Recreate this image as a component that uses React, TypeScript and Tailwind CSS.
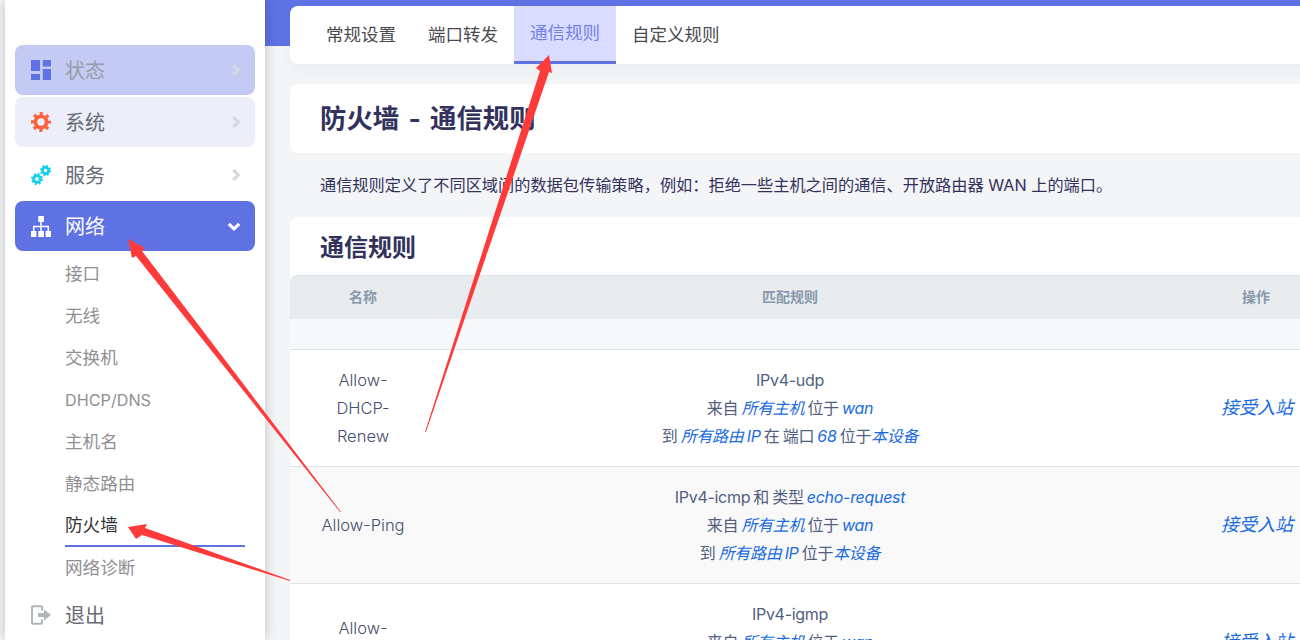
import React from "react";

function Dash() {
  return (
    <svg viewBox="0 0 20 20" className="w-5 h-5 fill-[#5e72e4]">
      <rect x="0" y="0" width="9" height="11" />
      <rect x="11.8" y="0" width="8.2" height="6.5" />
      <rect x="0" y="14" width="9" height="6" />
      <rect x="11.8" y="9" width="8.2" height="11" />
    </svg>
  );
}

function Gear() {
  return (
    <svg viewBox="0 0 20 20" className="w-5 h-5" fill="none" stroke="#fb6340">
      <circle cx="10" cy="10" r="5.6" strokeWidth="3.8" />
      <circle cx="10" cy="10" r="8.4" strokeWidth="3.2" strokeDasharray="3.2 3.4" strokeDashoffset="1.6" />
    </svg>
  );
}

function Cogs() {
  return (
    <svg viewBox="0 0 20 20" className="w-5 h-5" fill="none" stroke="#11cdef">
      <circle cx="6" cy="14" r="3.3" strokeWidth="2.8" />
      <circle cx="6" cy="14" r="5" strokeWidth="2" strokeDasharray="2 1.93" />
      <circle cx="14.5" cy="5.5" r="3.1" strokeWidth="2.6" />
      <circle cx="14.5" cy="5.5" r="4.6" strokeWidth="1.9" strokeDasharray="1.9 1.71" />
    </svg>
  );
}

function SiteMap() {
  return (
    <svg viewBox="0 0 20 21" className="w-5 h-[21px] shrink-0" fill="white">
      <rect x="7.3" y="0" width="5.6" height="6" />
      <rect x="0" y="15" width="5.4" height="6" />
      <rect x="7.3" y="15" width="5.6" height="6" />
      <rect x="14.6" y="15" width="5.4" height="6" />
      <path d="M10 6v9M2.7 15v-4.5h14.6V15" stroke="white" strokeWidth="1.5" fill="none" />
    </svg>
  );
}

function Exit() {
  return (
    <svg viewBox="0 0 20 20" className="w-5 h-5" fill="none">
      <path d="M11 5.5V2.2a1 1 0 0 0-1-1H2a1 1 0 0 0-1 1v15.6a1 1 0 0 0 1 1h8a1 1 0 0 0 1-1v-3.3" stroke="#adb5bd" strokeWidth="2" />
      <path d="M7 8h6V4.5l7 5.5-7 5.5V12H7z" fill="#adb5bd" />
    </svg>
  );
}

function ChevR() {
  return (
    <svg viewBox="0 0 10 14" className="w-[10px] h-[14px]" fill="none">
      <path d="M2.2 1.8 7.2 7l-5 5.2" stroke="#d5d9e0" strokeWidth="3.2" />
    </svg>
  );
}

function ChevD() {
  return (
    <svg viewBox="0 0 14 9" className="w-[14px] h-[9px]" fill="none">
      <path d="M1.8 1.8 7 6.8l5.2-5" stroke="white" strokeWidth="3.2" />
    </svg>
  );
}

function NavItem({ icon, label, cls, text, chev }: { icon: React.ReactNode; label: string; cls: string; text: string; chev: React.ReactNode }) {
  return (
    <div className={`h-[50px] rounded-lg flex items-center pl-4 pr-[14px] ${cls}`}>
      <span className="w-5 h-5 flex items-center justify-center">{icon}</span>
      <span className={`ml-[14px] mt-[1px] text-[20px] flex-1 ${text}`}>{label}</span>
      {chev}
    </div>
  );
}

const sub = ["接口", "无线", "交换机", "DHCP/DNS", "主机名", "静态路由", "防火墙", "网络诊断"];

function L({ children }: { children: React.ReactNode }) {
  return <em className="text-[#1a6be0] italic">{children}</em>;
}

function Row({ name, bg, lines }: { name: string; bg: string; lines: React.ReactNode[] }) {
  return (
    <div className={`grid grid-cols-[146px_708px_226px] border-b border-[#dee2e6] items-center text-[16px] leading-[28px] text-[#525f7f] py-4 ${bg}`}>
      <div className="text-center px-[29px] text-[16.5px] font-light text-[#46506e]">{name}</div>
      <div className="text-center tracking-[-0.3px] [word-spacing:-1px]">
        {lines.map((l, i) => (
          <div key={i}>{l}</div>
        ))}
      </div>
      <div className="text-[18px] pl-[77px]">
        <L>接受入站</L>
      </div>
    </div>
  );
}

const P = ({ children }: { children: string }) => <span className="font-['Noto_Sans_CJK_SC',sans-serif]">{children}</span>;

export default function App() {
  return (
    <div className="relative w-[1300px] h-[640px] overflow-hidden flex bg-[#f4f5f7] font-['Inter','Noto_Sans_CJK_SC',sans-serif]">
      <aside className="ml-[5px] w-[260px] shrink-0 h-full bg-white shadow-[0_0_12px_rgba(0,0,0,0.22)] z-10 px-[10px] pt-[45px]">
        <div className="flex flex-col gap-[2px]">
          <NavItem icon={<Dash />} label="状态" cls="bg-[#c3caf4]" text="text-[#9a9ca8]" chev={<ChevR />} />
          <NavItem icon={<Gear />} label="系统" cls="bg-[#eceefa]" text="text-[#666a75]" chev={<ChevR />} />
          <NavItem icon={<Cogs />} label="服务" cls="mt-[1px]" text="text-[#666a75]" chev={<ChevR />} />
          <NavItem icon={<SiteMap />} label="网络" cls="bg-[#5e72e4] -mt-[1px] pr-[13px]" text="text-white" chev={<ChevD />} />
        </div>
        <div className="pl-[50px] pr-[10px] pt-[2px]">
          {sub.map((s) => (
            <div
              key={s}
              className={`h-[42px] flex items-center ${s === "防火墙" ? "text-[#333] border-b-2 border-[#5e72e4]" : "text-[#8f8f94]"} ${s === "DHCP/DNS" ? "text-[16.2px]" : "text-[17.6px]"}`}
            >
              {s}
            </div>
          ))}
        </div>
        <div className="h-[50px] flex items-center pl-4 mt-[1px]">
          <Exit />
          <span className="ml-[14px] mt-[1px] text-[20px] text-[#666a75]">退出</span>
        </div>
      </aside>

      <main className="flex-1 min-w-0 relative">
        <div className="h-[46px] bg-[#5e72e4]" />
        <div className="-mt-[40px] pl-[25px] w-[1200px]">
          <div className="w-[1080px] h-[58px] bg-white rounded-l-lg flex pl-5 shadow-[0_8px_16px_rgba(0,0,0,0.03)]">
            {["常规设置", "端口转发", "通信规则", "自定义规则"].map((t) => (
              <div
                key={t}
                className={`px-4 flex items-center text-[17.5px] ${t === "通信规则" ? "bg-[#d9dcff] text-[#7480ea] border-b-[3px] border-[#5e72e4]" : "text-[#4a4a4f]"}`}
              >
                {t}
              </div>
            ))}
          </div>
          <div className="mt-5 w-[1080px] h-[69px] bg-white rounded-l-lg flex items-center pl-[30px] text-[26.4px] font-bold text-[#32325d] [word-spacing:3px]">
            防火墙 - 通信规则
          </div>
          <p className="mt-5 ml-[30px] text-[16.2px] leading-[22px] text-[#32325d] whitespace-nowrap">
            通信规则定义了不同区域间的数据包传输策略<P>，</P>例如<P>：</P>拒绝一些主机之间的通信<P>、</P>开放路由器 WAN 上的端口<P>。</P>
          </p>
          <div className="mt-[21px] w-[1080px] bg-white rounded-tl-lg">
            <div className="h-[58px] flex items-center pl-[30px] pt-[3px] text-[24px] font-bold text-[#32325d]">通信规则</div>
            <div className="grid grid-cols-[146px_708px_226px] h-[44px] pb-[2px] items-center border-t border-[#dee2e6] bg-[#e9ecef] rounded-tl-lg text-[14px] font-semibold text-[#8898aa]">
              <div className="text-center">名称</div>
              <div className="text-center">匹配规则</div>
              <div className="pl-[98px]">操作</div>
            </div>
            <div className="h-[31px] bg-[#f6f9fc] border-b border-[#dee2e6]" />
            <Row
              name="Allow-DHCP-Renew"
              bg="bg-white"
              lines={[
                "IPv4-udp",
                <>来自 <L>所有主机</L> 位于 <L>wan</L></>,
                <>到 <L>所有路由 IP</L> 在 端口 <L>68</L> 位于<L>本设备</L></>,
              ]}
            />
            <Row
              name="Allow-Ping"
              bg="bg-[#f9f9f9]"
              lines={[
                <>IPv4-icmp 和 类型 <L>echo-request</L></>,
                <>来自 <L>所有主机</L> 位于 <L>wan</L></>,
                <>到 <L>所有路由 IP</L> 位于<L>本设备</L></>,
              ]}
            />
            <Row
              name="Allow-IGMP"
              bg="bg-white"
              lines={["IPv4-igmp", <>来自 <L>所有主机</L> 位于 <L>wan</L></>, <>到 <L>所有路由 IP</L> 位于<L>本设备</L></>]}
            />
          </div>
        </div>
      </main>

      <svg className="absolute left-0 top-0 w-[1300px] h-[640px] z-20 pointer-events-none" viewBox="0 0 1300 640">
        <polygon points="425,432 540,71 536,68 549,55 552,73 549,72 426,432" fill="#ff3a3a" />
        <polygon points="340,512 136,256 132,258 128,239 145,248 142,251 341,512" fill="#ff3a3a" />
        <polygon points="290,580 145,528 147,524 128,527 136,539 142,535 290,581" fill="#ff3a3a" />
      </svg>
    </div>
  );
}
